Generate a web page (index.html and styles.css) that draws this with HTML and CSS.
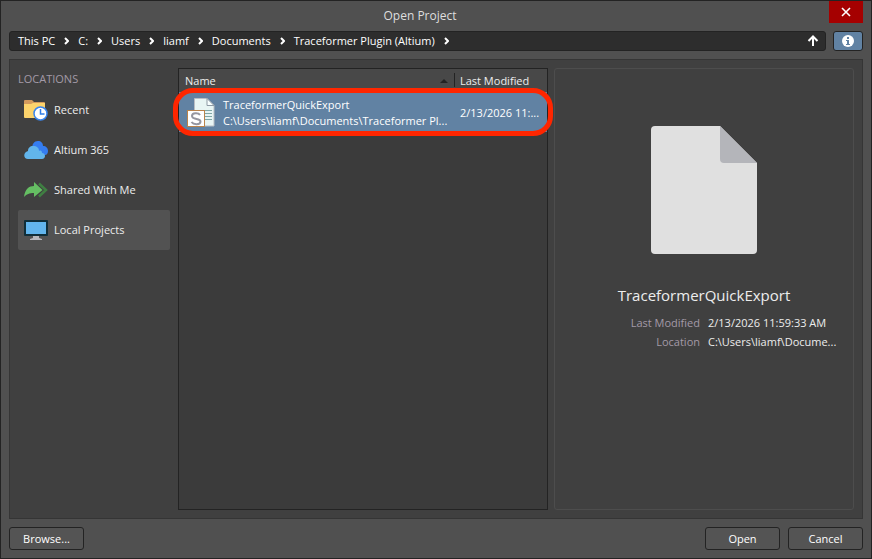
FILE: index.html
```
<!DOCTYPE html>
<html lang="en">
<head>
<meta charset="utf-8">
<title>Open Project</title>
<link rel="stylesheet" href="styles.css">
</head>
<body>
<main class="dialog">
  <header class="titlebar">
    <h1 class="title">Open Project</h1>
    <button class="close" type="button" aria-label="Close">
      <svg width="10" height="10" viewBox="0 0 10 10"><path d="M1 1l8 8M9 1l-8 8" stroke="#fff" stroke-width="1.6"/></svg>
    </button>
  </header>

  <div class="pathrow">
    <nav class="path" aria-label="Path">
      <a href="#">This PC</a><svg class="chev" viewBox="0 0 5 8"><path d="M1 1l3 3-3 3"/></svg>
      <a href="#">C:</a><svg class="chev" viewBox="0 0 5 8"><path d="M1 1l3 3-3 3"/></svg>
      <a href="#">Users</a><svg class="chev" viewBox="0 0 5 8"><path d="M1 1l3 3-3 3"/></svg>
      <a href="#">liamf</a><svg class="chev" viewBox="0 0 5 8"><path d="M1 1l3 3-3 3"/></svg>
      <a href="#">Documents</a><svg class="chev" viewBox="0 0 5 8"><path d="M1 1l3 3-3 3"/></svg>
      <a href="#">Traceformer Plugin (Altium)</a><svg class="chev" viewBox="0 0 5 8"><path d="M1 1l3 3-3 3"/></svg>
      <button class="up" type="button" aria-label="Up one level">
        <svg width="12" height="12" viewBox="0 0 12 12"><path d="M6 11V2M1.500 6L6 1.500 10.500 6" fill="none" stroke="#fff" stroke-width="2"/></svg>
      </button>
    </nav>
    <button class="info" type="button" aria-label="Details">
      <svg width="12" height="12" viewBox="0 0 12 12"><circle cx="6" cy="6" r="6" fill="#fff"/><path d="M5 2h2v2H5zM4 5h3v4h1v1H4V9h1V6H4z" fill="#6182a3"/></svg>
    </button>
  </div>

  <div class="panel">
    <nav class="sidebar" aria-label="Locations">
      <h2 class="heading">LOCATIONS</h2>
      <a class="place" href="#">
        <svg width="24" height="22" viewBox="0 0 24 22"><path d="M0 2q0-1 1-1h7l2 2h10q1 0 1 1v6H0z" fill="#d39a5d"/><path d="M0 5h7l2-1h12v15H1q-1 0-1-1z" fill="#fcd36c"/><circle cx="16.500" cy="14.500" r="6.500" fill="#fff" stroke="#3985ee" stroke-width="1.500"/><path d="M16.500 10v5h4" fill="none" stroke="#2f7de8" stroke-width="1.500"/></svg>
        <span>Recent</span></a>
      <a class="place" href="#">
        <svg width="24" height="22" viewBox="0 0 24 22"><path d="M8 10C8 5 10 2 14 2c3 0 5 2 5 5 3 0 5 2 5 5 0 2-1 4-3 4H10z" fill="#357df0"/><path d="M4 20c-5 0-5-7 0-8 0-3 2-5 5-5 4 0 6 2 6 5 2-1 3 0 3 2 4 0 4 6 0 6z" fill="#62b5eb"/></svg>
        <span>Altium 365</span></a>
      <a class="place" href="#">
        <svg width="24" height="22" viewBox="0 0 24 22"><path d="M15 4.500l7 6.500-7 6.500" fill="none" stroke="#3f7f42" stroke-width="2.500"/><path d="M0 18C1 10 5 7 10 7V3l8.500 8-8.500 7v-4c-5 0-7 1-10 4z" fill="#65be63"/></svg>
        <span>Shared With Me</span></a>
      <a class="place current" href="#" aria-current="page">
        <svg width="24" height="22" viewBox="0 0 24 22"><rect y="1" width="24" height="16" rx="1" fill="#102e39"/><path d="M2 3h20v12H2z" fill="#62b5ed"/><path d="M9 17h6v2l3 1v1H6v-1l3-1z" fill="#b7b8bd"/></svg>
        <span>Local Projects</span></a>
    </nav>

    <section class="files">
      <table class="table">
        <thead>
          <tr>
            <th class="namecol" scope="col"><div class="sort">Name<svg width="8" height="4" viewBox="0 0 8 4"><path d="M0 4l4-4 4 4z" fill="#222"/></svg></div></th>
            <th class="datecol" scope="col">Last Modified</th>
          </tr>
        </thead>
        <tbody>
          <tr class="selected">
            <td>
              <div class="file">
                <svg class="fileicon" width="28" height="30" viewBox="0 0 28 30"><path d="M7.500 .5H20l7 7V28H7.500z" fill="#e8f5f4" stroke="#b8bdc4"/><path d="M20 .5v7h7z" fill="#f8ffff" stroke="#8e9aa5"/><path d="M18 12.500h7M18 15.500h7M18 18.500h7M18 21.500h7" stroke="#7fa6a6"/><rect x=".5" y="12.500" width="17" height="16" fill="#fff" stroke="#b9834b"/><path d="M13 17C11.500 14.500 5 14.500 5 18c0 4 8.500 2 8.500 5.500 0 3.500-7 3.500-9 .5" fill="none" stroke="#9596a0" stroke-width="2"/></svg>
                <div class="filetext">
                  <div>TraceformerQuickExport</div>
                  <div>C:\Users\liamf\Documents\Traceformer Pl...</div>
                </div>
              </div>
            </td>
            <td>2/13/2026 11:...</td>
          </tr>
        </tbody>
      </table>
      <div class="marker"></div>
    </section>

    <aside class="details">
      <svg class="preview" width="106" height="128" viewBox="0 0 106 128"><path d="M4 0h65l37 37v87q0 4-4 4H4q-4 0-4-4V4q0-4 4-4z" fill="#e0e0e0"/><path d="M69 0l37 37H73q-4 0-4-4z" fill="#b4b5ba"/></svg>
      <h2 class="project">TraceformerQuickExport</h2>
      <dl class="facts">
        <dt>Last Modified</dt><dd>2/13/2026 11:59:33 AM</dd>
        <dt>Location</dt><dd>C:\Users\liamf\Docume...</dd>
      </dl>
    </aside>
  </div>

  <footer class="actions">
    <button class="btn browse" type="button">Browse...</button>
    <button class="btn" type="button">Open</button>
    <button class="btn" type="button">Cancel</button>
  </footer>
</main>
</body>
</html>
```
FILE: styles.css
```
* { box-sizing: border-box; }
body {
  margin: 0;
  font: 11px/16px "Open Sans", "Noto Sans", sans-serif;
  color: #ededed;
}
a { color: inherit; text-decoration: none; }
button { font: inherit; color: inherit; padding: 0; margin: 0; }
svg { display: block; flex: none; }
h1, h2, dl, dd { margin: 0; font-weight: 400; }

.dialog {
  display: flex;
  flex-direction: column;
  min-height: 100vh;
  background: #505050;
  border: 1px solid #232323;
}
.titlebar {
  display: grid;
  grid-template-columns: 10px 1fr 34px;
  height: 30px;
  margin-right: 8px;
}
.title {
  grid-column: 2;
  font-size: 12px;
  line-height: 30px;
  text-align: center;
  color: #dedede;
}
.close {
  display: grid;
  place-items: center;
  height: 22px;
  background: #a50000;
  border: 0;
}
.pathrow {
  display: flex;
  gap: 7px;
  margin: 0 8px 8px;
}
.path {
  display: flex;
  flex: 1;
  align-items: center;
  gap: 9px;
  height: 20px;
  padding: 0 6px 0 8px;
  background: #2d2d2d;
  border: 1px solid #232323;
  border-radius: 3px;
  color: #fff;
  white-space: nowrap;
}
.chev {
  width: 5px;
  height: 8px;
  fill: none;
  stroke: #fff;
  stroke-width: 2;
}
.up {
  margin-left: auto;
  background: none;
  border: 0;
}
.info {
  display: grid;
  place-items: center;
  width: 30px;
  height: 20px;
  background: #6182a3;
  border: 1px solid #232323;
  border-radius: 3px;
}

.panel {
  display: grid;
  grid-template-columns: 152px 384fr 300fr;
  flex: 1;
  margin: 0 8px;
  padding: 8px;
  background: #404040;
  border: 1px solid #353535;
}
.heading {
  height: 22px;
  font-size: 11px;
  line-height: 22px;
  color: #a39aa7;
}
.place {
  display: flex;
  align-items: center;
  gap: 6px;
  height: 40px;
  padding-left: 6px;
  border-radius: 2px;
  line-height: 18px;
}
.current { background: #525252; }

.files {
  position: relative;
  margin: 0 6px 0 8px;
  background: #3b3b3b;
  border: 1px solid #232323;
}
.table {
  width: 100%;
  table-layout: fixed;
  border-collapse: collapse;
}
.table th {
  height: 23px;
  padding: 0 6px;
  background: #484848;
  font-weight: 400;
  text-align: left;
}
.table .datecol {
  width: 93px;
  background: linear-gradient(#232323, #232323) 0 4px / 1px 14px no-repeat #484848;
}
.sort {
  display: flex;
  align-items: center;
  justify-content: space-between;
}
.selected { background: #6182a3; color: #fff; }
.selected td {
  height: 40px;
  padding: 1px 0 0 6px;
  white-space: nowrap;
}
.file {
  display: flex;
  align-items: center;
  gap: 8px;
  padding-left: 2px;
}
.filetext { min-width: 0; }
.marker {
  position: absolute;
  top: 19px;
  left: -6px;
  right: -6px;
  height: 48px;
  border: 5px solid #ff2600;
  border-radius: 20px;
}

.details {
  display: flex;
  flex-direction: column;
  align-items: center;
  padding-top: 57px;
  border: 1px solid #4d4d4d;
  border-radius: 3px;
}
.project {
  margin-top: 29px;
  font-size: 15px;
  line-height: 24px;
}
.facts {
  display: grid;
  grid-template-columns: 1fr 1fr;
  column-gap: 8px;
  width: 100%;
  margin-top: 6px;
  line-height: 19px;
  white-space: nowrap;
}
.facts dt { color: #a39aa7; text-align: right; }

.actions {
  display: flex;
  gap: 8px;
  padding: 8px;
}
.btn {
  width: 75px;
  height: 23px;
  background: #545454;
  border: 1px solid #232323;
  border-radius: 3px;
  color: #fff;
}
.browse { margin-right: auto; }
```
